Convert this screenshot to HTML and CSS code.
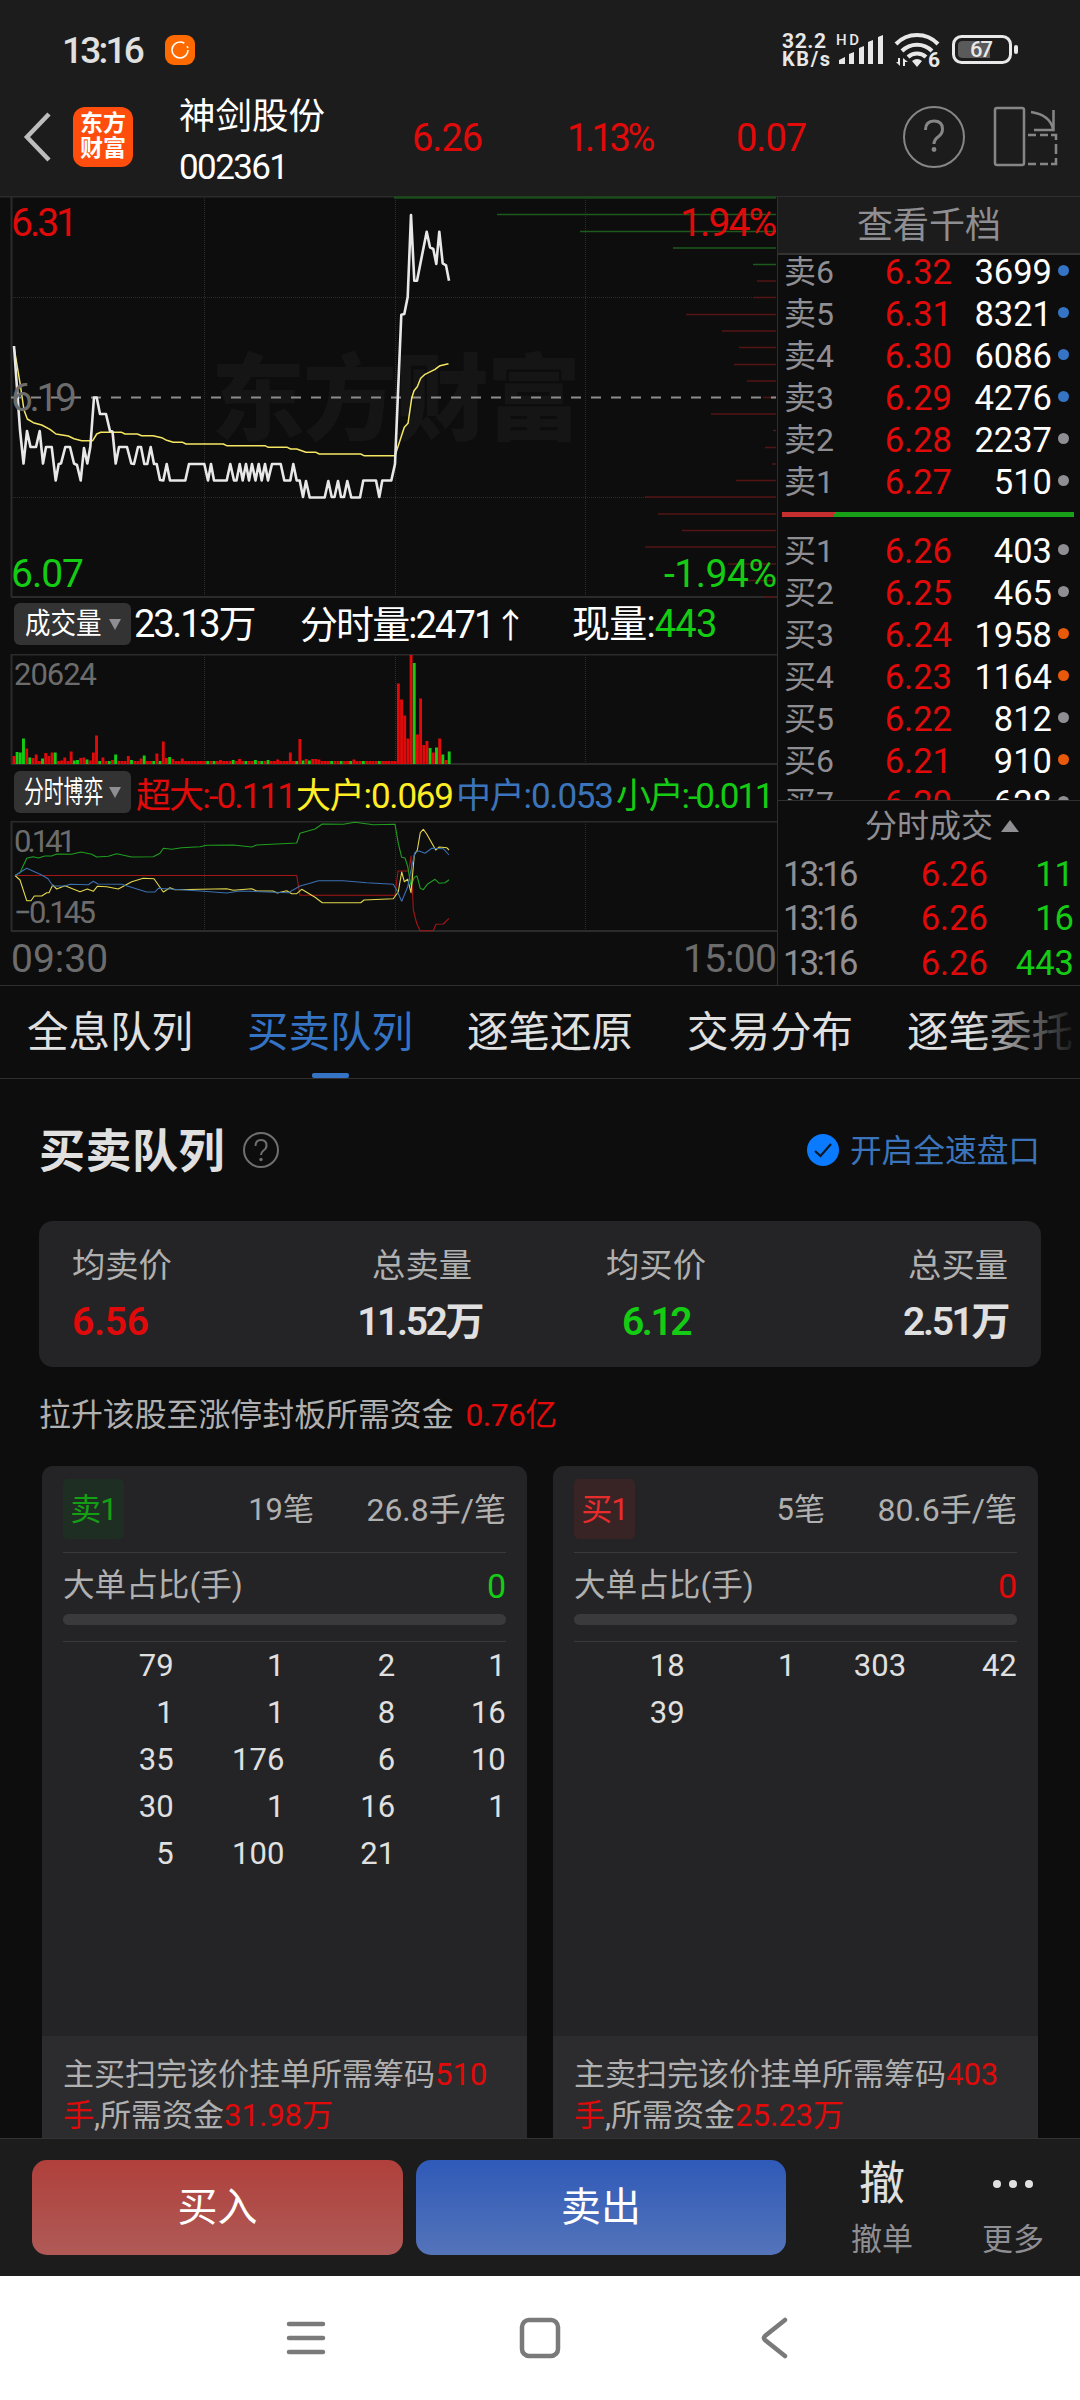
FILE: index.html
```html
<!DOCTYPE html>
<html lang="zh-CN">
<head>
    <meta charset="UTF-8">
    <title>神剑股份 002361</title>
    <link rel="stylesheet" href="styles.css">
</head>
<body>
    <div class="app">
        <div class="status-bar">
            <span class="clock">13:16</span>
            <svg class="status-app" viewBox="0 0 30 30">
                <rect width="30" height="30" rx="9" fill="#ff6a00"/>
                <circle cx="15" cy="15" r="8" fill="none" stroke="#fff" stroke-width="1.6" stroke-dasharray="42 4 2 3"/>
            </svg>
            <svg class="status-icons" viewBox="0 0 252 44" fill="#e8e8e8">
                <g font-weight="700">
                    <text x="0" y="19.500" font-size="21" textLength="44">32.2</text>
                    <text x="0" y="38" font-size="20" textLength="48">KB/s</text>
                    <text x="54" y="17" font-size="15" font-weight="500" textLength="23">HD</text>
                </g>
                <path d="M57 36v-4l6-3v7zM67 36V26l5-2v12zM77 36V20l5-2v18zM86 36V14l5-2v24zM96 36V9l5-2v29z"/>
                <g fill="none" stroke="#e8e8e8" stroke-width="4">
                    <path d="M114 16a29 29 0 0 1 42 0"/>
                    <path d="M120 23a21 21 0 0 1 30 0"/>
                    <path d="M126 29a13 13 0 0 1 18 0"/>
                </g>
                <path d="M130 33q5-4 10 0l-5 6zM118 30v8l-4-4h2v-4zM121 38v-8l5 4h-3v4z"/>
                <text x="146" y="39" font-size="21" font-weight="700">6</text>
                <rect x="171.500" y="8.500" width="57" height="26" rx="8" fill="none" stroke="#e8e8e8" stroke-width="3"/>
                <path d="M181 13h27v17h-27q-5 0-5-4v-9q0-4 5-4z" fill="#5a5a5a"/>
                <rect x="232" y="17" width="4" height="9" rx="2"/>
                <text x="188" y="29" font-size="22" font-weight="500" textLength="23">67</text>
            </svg>
        </div>

        <div class="header">
            <svg class="back" viewBox="0 0 32 50"><path d="M27 2 5 25l22 23" fill="none" stroke="#bdbdbd" stroke-width="4.500"/></svg>
            <div class="logo">东方<br>财富</div>
            <div class="stock">
                <div class="stock-name">神剑股份</div>
                <div class="stock-code">002361</div>
            </div>
            <div class="quote">
                <span>6.26</span><span>1.13%</span><span>0.07</span>
            </div>
            <svg class="header-icons" viewBox="0 0 160 64" fill="none" stroke="#868686" stroke-width="2">
                <circle cx="32" cy="32" r="30"/>
                <path d="M23.500 25q0-9 8.500-9t8.500 8q0 5-4.500 8-4 3-4 7" stroke-width="3"/>
                <circle cx="32" cy="44.500" r="2.400" fill="#868686" stroke="none"/>
                <rect x="93" y="3" width="29" height="57" rx="2" stroke-width="2.500"/>
                <path d="M129 7q19 3 22 17M151.500 5v20H132" stroke-width="2.500"/>
                <path d="M126 30h8M138 30h8M149 30h5v5M154 39v10M154 53v6h-5M126 59h8M138 59h8" stroke-width="2.500"/>
            </svg>
        </div>

        <div class="market">
            <div class="charts">
                <svg class="price-chart" viewBox="0 196 777 404">
                    <text class="watermark" x="211" y="433" textLength="370">东方财富</text>
                    <path class="frame" d="M0 196.500h777M11.500 196v401M11 597h766"/>
                    <path class="grid" d="M204.500 198v398M395.500 198v398M585.500 198v398M11 297.500h765M11 497.500h765"/>
                    <path stroke="#1b4a1b" stroke-width="2.500" d="M394 197.500h382"/>
                    <path stroke="#1d5a1d" stroke-width="1.300" d="M497 214.500h279M580 231.500h196M673 248h103M753 264.500h23"/>
                    <path stroke="#541414" stroke-width="1.400" d="M757 281h19M754 297.500h22M686 314.500h90M722 331h54M739 347.500h37M734 364.500h42M747 381h29M763 397.500h13M711 414h65M773 430.500h3M765 447.500h11M772 464h4M736 480.500h40M645 497h131M658 514h118M682 530.500h94M645 547h131M728 564h48M745 580.500h31M763 597h13"/>
                    <path stroke="#8d8d8d" stroke-width="2" stroke-dasharray="10 10" d="M11 397.500h765"/>
                    <polyline class="line" stroke="#f5e763" points="14,347 20,383 24,410 27.300,419 33.300,422.700 41.700,425 50,429.300 56,434 68.300,436 74,438.700 81.700,440.700 92.700,440.700 96.700,434 100.700,432.300 121.700,432.300 125,434 137.300,434 141.700,435.700 153,435.700 161.700,437.700 166.700,440.300 173.300,442.300 182.700,442.300 186,444 223.300,444 226.700,445.700 265,445.700 268.300,447.300 287.300,447.300 290.700,449 296.700,449 306,452.300 316,452.300 319.300,454 360.700,454 364,455.700 395,455.700 404.300,427.300 408,423.300 411.700,398.300 414,390.700 417.300,386.700 420.700,378.300 425,374.300 435,369.300 440,365.700 448.500,363.700"/>
                    <polyline class="line thick" stroke="#e8e8e8" points="14,346 20,430 23.500,463.500 27,431 30.500,447 36,447 39.700,431 43,463.500 46,447 51.700,447 55.700,480.500 58.700,464 61,463.500 65.300,447 70,447 74,463.500 77,465 80.700,480.500 84,448 87.300,463.500 90.300,447 94,397.500 96.700,397.500 100,414 106,414 110,431 112.500,431.500 115.700,463.500 119,447 127,447 131.300,463.500 134,464 138,447 141,447 144.300,464 147.300,464 150.700,447 154,464 156.700,464 160,480 163.300,480.500 166.700,464 170,480.500 185.300,480.500 189,464 204.300,464 208,480.500 211,464 214,480.500 226.700,480.500 230.300,464 234,480.500 236.500,480.500 239.700,464 242.700,480.500 246,464 249,480.500 252,464 255.500,480.500 258.700,464 261.700,480.500 265,464 268,480.500 272,464 280.700,464 284.300,480.500 290.300,480.500 293.300,464 296.700,480.500 299.700,480.500 303,497 306,481 309.700,497.500 324.700,497.500 328.300,481 331.700,497 334.500,497 338,481 341,497 344,497 347.300,481 351.300,497.500 360,497.500 363.300,480.500 376,480.500 379.300,497 382.300,480.500 391.300,480.500 395,464 401.300,314.700 404.300,314 407.700,297 411,215 414.300,280.700 417,280.700 426.700,231.700 430,247.300 433.300,249 436.300,264 439.300,231.700 442.700,263.300 446,265.300 449,280.700"/>
                    <g font-size="39">
                        <text class="red" x="11" y="236" textLength="67">6.31</text>
                        <text class="red" x="680" y="236" textLength="97">1.94%</text>
                        <text class="dim" x="11" y="411" textLength="66">6.19</text>
                        <text class="green" x="11" y="587" textLength="73">6.07</text>
                        <text class="green" x="664" y="587" textLength="113">-1.94%</text>
                    </g>
                </svg>

                <div class="indicator volume-info">
                    <span class="chip"><span>成交量</span><i class="caret"></i></span>
                    <span class="total">23.13万</span>
                    <span class="minute">分时量:2471<i class="arrow">↑</i></span>
                    <span class="now">现量:<b class="green">443</b></span>
                </div>

                <svg class="volume-chart" viewBox="0 654 777 111">
                    <path class="frame thin" d="M11 654.500h766M11.500 654v110M11 764h766"/>
                    <path class="grid" d="M204.500 655v108M395.500 655v108M585.500 655v108"/>
                    <g id="volume"></g>
                    <text class="dim" x="14" y="685" font-size="31" textLength="83">20624</text>
                </svg>

                <div class="indicator game-info">
                    <span class="chip chip-narrow"><span>分时博弈</span><i class="caret"></i></span>
                    <b class="red">超大:-0.111</b>
                    <b class="yellow">大户:0.069</b>
                    <b class="blue">中户:0.053</b>
                    <b class="green">小户:-0.011</b>
                </div>

                <svg class="game-chart" viewBox="0 821 777 112">
                    <path class="frame thin" d="M11 821.500h766M11.500 821v110M11 931h766"/>
                    <path class="grid" d="M204.500 822v108M395.500 822v108M585.500 822v108"/>
                    <g font-size="31">
                        <text class="dim" x="14" y="852" textLength="62">0.141</text>
                        <text class="dim" x="14" y="923" textLength="82">−0.145</text>
                    </g>
                    <polyline class="line thin" stroke="#a31616" points="15,875.500 296.700,875.500 300,895.300 395,895.300 398,871 408.700,871 411,856 413.300,910 416.700,923.300 420,930.700 433.300,930.700 436,924.300 443.300,924 449,918.300"/>
                    <polyline class="line thin" stroke="#1f9e1f" points="15,875.500 20,872.700 26.700,858.300 33,856.700 38.300,858 45,856 51.700,856 56.700,854 71.700,854.300 81,852 91.700,854.300 96.700,857 108.300,856.300 116.700,853.700 131.700,857 153.300,856.700 160,853.300 163.300,848.300 171.700,849.300 181.700,847.700 200,846.700 206.700,845.300 233.300,845 251.700,847 256.700,845 296.700,843 300,833.300 315,829 322.300,824 343.300,824.300 355,822.300 373.300,824.700 395,824.300 398.300,843.300 401.700,857.300 405,858 407.700,866.700 411,886 414.300,877.300 417,876 420.300,888.300 423.300,889.700 427.300,884.300 435,879.300 439.300,883.300 445,882.700 449,879.700"/>
                    <polyline class="line thin" stroke="#e5d84e" points="15,875.500 20,880 26.700,900.700 31,900.700 34.300,896 41.700,896 46.700,892.700 49,892.700 52.700,885 56.700,889 65,885.700 80,891.700 87.300,889 93.300,891.300 97.300,886.300 106.700,886.700 118.300,889 131.700,881.700 143.300,878.300 154,878.700 163.300,892 170,887.700 175,889.700 226.700,888.700 233.300,890.300 251.700,888.700 256.700,891 273,891 277.300,893 286.700,890.700 291.700,893.700 296.700,893.700 301.700,889.300 315,897.300 322.300,902.700 360.700,902.700 364,900 393.300,898.700 398.300,891.700 401.700,872 404.300,881.700 407.700,879.300 411,892.700 414.300,855 417.300,850 420.300,832.700 423.300,829.300 426.700,834 435.700,850 439.300,847 446.700,847.700 449,850"/>
                    <polyline class="line thin" stroke="#3a6fb0" points="15,875.500 26.700,868.300 41.700,875 48,878.700 53,886 65,886 70,884.300 88.300,884.700 93.300,881.300 98,884 121.700,884.300 133,887.700 146.700,892 155,892 158.300,888.300 173.300,889.300 200,891 226.700,893 240,891 288.300,892.700 300,886 310,883.300 318.300,880.700 343.300,880.700 366.700,882.700 393.300,884.300 396.700,890 401.700,901.300 407.700,886.700 411.700,866.700 415,852.300 419.300,851 425,853.300 431.700,848.300 443.300,848.700 449,855"/>
                </svg>

                <div class="time-axis"><span>09:30</span><span>15:00</span></div>
            </div>

            <div class="depth">
                <div class="depth-title">查看千档</div>
                <div class="book">
                    <div class="level"><span>卖6</span><b>6.32</b><em>3699</em><i class="dot blue-dot"></i></div>
                    <div class="level"><span>卖5</span><b>6.31</b><em>8321</em><i class="dot blue-dot"></i></div>
                    <div class="level"><span>卖4</span><b>6.30</b><em>6086</em><i class="dot blue-dot"></i></div>
                    <div class="level"><span>卖3</span><b>6.29</b><em>4276</em><i class="dot blue-dot"></i></div>
                    <div class="level"><span>卖2</span><b>6.28</b><em>2237</em><i class="dot"></i></div>
                    <div class="level"><span>卖1</span><b>6.27</b><em>510</em><i class="dot"></i></div>
                    <div class="ratio"></div>
                    <div class="level"><span>买1</span><b>6.26</b><em>403</em><i class="dot"></i></div>
                    <div class="level"><span>买2</span><b>6.25</b><em>465</em><i class="dot"></i></div>
                    <div class="level"><span>买3</span><b>6.24</b><em>1958</em><i class="dot orange-dot"></i></div>
                    <div class="level"><span>买4</span><b>6.23</b><em>1164</em><i class="dot orange-dot"></i></div>
                    <div class="level"><span>买5</span><b>6.22</b><em>812</em><i class="dot"></i></div>
                    <div class="level"><span>买6</span><b>6.21</b><em>910</em><i class="dot orange-dot"></i></div>
                    <div class="level"><span>买7</span><b>6.20</b><em>628</em><i class="dot"></i></div>
                </div>
                <div class="ticks-title">分时成交<i class="caret-up"></i></div>
                <div class="tick"><span>13:16</span><b>6.26</b><em>11</em></div>
                <div class="tick"><span>13:16</span><b>6.26</b><em>16</em></div>
                <div class="tick"><span>13:16</span><b>6.26</b><em>443</em></div>
            </div>
        </div>

        <div class="tabs">
            <span>全息队列</span>
            <span class="active">买卖队列</span>
            <span>逐笔还原</span>
            <span>交易分布</span>
            <span>逐笔委托</span>
        </div>

        <div class="content">
            <div class="section-head">
                <h2>买卖队列</h2>
                <svg class="help" viewBox="0 0 38 38" fill="none" stroke="#6f6f6f" stroke-width="2">
                    <circle cx="19" cy="19" r="17"/>
                    <path d="M13.500 15q0-6 5.500-6t5.500 5.500q0 3-3 5-2.500 2-2.500 4.500"/>
                    <circle cx="19" cy="28.500" r="1.700" fill="#6f6f6f" stroke="none"/>
                </svg>
                <svg class="check" viewBox="0 0 32 32">
                    <circle cx="16" cy="16" r="16" fill="#0a7aff"/>
                    <path d="m8 17 5.500 5L24 10" fill="none" stroke="#10181f" stroke-width="2.200"/>
                </svg>
                <span class="speed">开启全速盘口</span>
            </div>

            <div class="summary">
                <div class="stat"><span>均卖价</span><b class="red">6.56</b></div>
                <div class="stat right sell-total"><span>总卖量</span><b>11.52万</b></div>
                <div class="stat middle"><span>均买价</span><b class="green">6.12</b></div>
                <div class="stat right"><span>总买量</span><b>2.51万</b></div>
            </div>

            <p class="limit">拉升该股至涨停封板所需资金 <span class="red">0.76亿</span></p>

            <div class="queues">
                <div class="queue">
                    <div class="queue-head">
                        <span class="badge sell">卖1</span>
                        <span class="count">19笔</span>
                        <span class="avg">26.8手/笔</span>
                    </div>
                    <div class="big-order"><span>大单占比(手)</span><b class="green">0</b></div>
                    <div class="track"></div>
                    <div class="orders">
                        <span>79</span><span>1</span><span>2</span><span>1</span>
                        <span>1</span><span>1</span><span>8</span><span>16</span>
                        <span>35</span><span>176</span><span>6</span><span>10</span>
                        <span>30</span><span>1</span><span>16</span><span>1</span>
                        <span>5</span><span>100</span><span>21</span>
                    </div>
                    <div class="queue-foot">主买扫完该价挂单所需筹码<span class="red">510<br>手</span>,所需资金<span class="red">31.98万</span></div>
                </div>
                <div class="queue">
                    <div class="queue-head">
                        <span class="badge buy">买1</span>
                        <span class="count">5笔</span>
                        <span class="avg">80.6手/笔</span>
                    </div>
                    <div class="big-order"><span>大单占比(手)</span><b class="red">0</b></div>
                    <div class="track"></div>
                    <div class="orders">
                        <span>18</span><span>1</span><span>303</span><span>42</span>
                        <span>39</span>
                    </div>
                    <div class="queue-foot">主卖扫完该价挂单所需筹码<span class="red">403<br>手</span>,所需资金<span class="red">25.23万</span></div>
                </div>
            </div>
        </div>

        <div class="actions">
            <button class="btn btn-buy">买入</button>
            <button class="btn btn-sell">卖出</button>
            <div class="action"><span class="action-icon">撤</span><span>撤单</span></div>
            <div class="action more">
                <svg class="action-icon" viewBox="0 0 46 56" fill="#e0e0e0">
                    <circle cx="7" cy="27" r="4"/><circle cx="23" cy="27" r="4"/><circle cx="39" cy="27" r="4"/>
                </svg>
                <span>更多</span>
            </div>
        </div>

        <div class="nav-bar">
            <svg viewBox="0 0 44 44"><path d="M5 8h34M5 22h34M5 36h34"/></svg>
            <svg viewBox="0 0 44 44"><rect x="4" y="4" width="36" height="36" rx="7"/></svg>
            <svg viewBox="0 0 44 44"><path d="M33 4 13 20q-2 2 0 4l20 16"/></svg>
        </div>
    </div>

    <script>
        // one bar per minute, negative = falling minute
        const volumes = [
            8, -12, -11.5, -25.5, 15.5, -6.5, 6, 9.5, 3, -5.5, 11, 8, 11.5, -11.5, 3, 3.5, 6.5, 3, 12.5, -3.5,
            -4, 6, 6.5, -4.5, 3.5, 11.5, 28.5, -3, 6.5, 3, -3, 4, -9.5, 3, 3, 3, 8, -4, 3, 3,
            5.5, -8.5, 3, 3, -3, 10.5, -3, 22.5, 6, -7, 5, 3, 3, 5.5, 3, 3, 3, 3, 3, 3,
            3, -3, 3, -3, 3, 4, 3, 3, 3, -4, 3, 5, 3, -3, 3, 3, -4, 3, -3, 3,
            -4, 3, 3, 4.5, 3, 3, 3, 11.5, 3, -3, 25, -3.5, 5, -3.5, 5, 5, 4.5, 3, 3, 3,
            -3, 3, 3, -3, 3, 3, -3, 4.5, 3, 3, -3, 3, 3, 3, 3, -3, 3, 3, 3, 3,
            3, 80.5, 64.5, 48.5, 25.5, 109, -101, 29.5, 65.5, 19, 23, -16, 11.5, -16.5, 25.5, -9.5, 4, -12.5
        ];
        const svg = document.getElementById('volume');

        volumes.forEach((v, i) => {
            const bar = document.createElementNS('http://www.w3.org/2000/svg', 'rect');
            const h = Math.abs(v);
            bar.setAttribute('x', 12.5 + i * 3.177);
            bar.setAttribute('y', 764 - h);
            bar.setAttribute('width', 2.9);
            bar.setAttribute('height', h);
            bar.setAttribute('class', v < 0 ? 'green' : 'red');
            svg.appendChild(bar);
        });
    </script>
</body>
</html>
```

FILE: styles.css
```css
* {
    box-sizing: border-box;
}

body {
    margin: 0;
    background: #0d0d0d;
    color: #e0e0e0;
    font-family: Roboto, "Noto Sans CJK SC", sans-serif;
}

b, em, i {
    font-weight: inherit;
    font-style: normal;
}

svg {
    display: block;
    flex: none;
}

.app {
    width: 1080px;
    height: 2400px;
    display: flex;
    flex-direction: column;
    overflow: hidden;
}

.red { color: #e00a0a; fill: #e00a0a; }
.green { color: #14cc14; fill: #14cc14; }
.yellow { color: #ffee24; }
.blue { color: #3b74ba; }
.dim { fill: #6c6c6c; }

/* status bar */
.status-bar {
    height: 98px;
    padding: 2px 46px 0 62px;
    background: #1c1c1c;
    display: flex;
    align-items: center;
}

.clock {
    width: 103px;
    font-size: 37px;
    font-weight: 500;
    letter-spacing: -2.8px;
}

.status-app {
    width: 30px;
    height: 30px;
}

.status-icons {
    width: 252px;
    height: 44px;
    margin-left: auto;
}

/* header */
.header {
    height: 98px;
    padding-left: 22px;
    background: #1c1c1c;
    display: flex;
    align-items: center;
    padding-bottom: 20px;
}

.back {
    width: 32px;
    height: 50px;
}

.logo {
    width: 60px;
    height: 60px;
    margin-left: 19px;
    border-radius: 12px;
    background: #ff4d0d;
    color: #fff;
    font-size: 23px;
    font-weight: 700;
    line-height: 25px;
    padding-top: 4px;
    text-align: center;
}

.stock {
    width: 233px;
    margin-left: 46px;
    padding-top: 10px;
    color: #fff;
    line-height: 51px;
}

.stock-name {
    font-size: 36.5px;
}

.stock-code {
    font-size: 35px;
    letter-spacing: -1.6px;
}

.quote {
    width: 490px;
    padding-top: 2px;
    display: flex;
    font-size: 38px;
    letter-spacing: -1px;
    color: #e00a0a;
}

.quote span:nth-child(1) { width: 155px; }
.quote span:nth-child(2) { width: 169px; letter-spacing: -3.4px; }

.header-icons {
    width: 160px;
    height: 64px;
}

/* charts and order book */
.market {
    height: 790px;
    display: flex;
    border-bottom: 1px solid #2f2f2f;
}

.charts {
    width: 777px;
    flex: none;
}

.price-chart { height: 404px; }
.volume-chart { height: 111px; }
.game-chart { height: 112px; }

.price-chart,
.volume-chart,
.game-chart {
    width: 777px;
}

.frame {
    fill: none;
    stroke: #2b2b2b;
    stroke-width: 2;
}

.grid {
    fill: none;
    stroke: #2d2d2d;
    stroke-width: 1;
    stroke-dasharray: 1 1;
}

.line {
    fill: none;
    stroke-width: 1.5;
    stroke-linejoin: round;
}

.line.thick { stroke-width: 2.6; }
.line.thin { stroke-width: 1.1; }

.watermark {
    fill: #151515;
    font-family: "Noto Sans CJK SC", sans-serif;
    font-size: 94px;
    font-weight: 900;
}

.indicator {
    display: flex;
    align-items: center;
    color: #fff;
    font-size: 38px;
    white-space: nowrap;
}

.volume-info {
    height: 54px;
    padding: 0 0 6px 14px;
    line-height: 40px;
}

.game-info {
    height: 56px;
    padding: 0 0 2px 14px;
    font-size: 35px;
}

.chip {
    width: 117px;
    height: 42px;
    padding: 0 8px 0 11px;
    border-radius: 6px;
    background: #333;
    font-size: 29px;
    line-height: 44px;
    display: flex;
    align-items: center;
}

.chip span {
    width: 84px;
    transform: scaleX(0.88);
    transform-origin: left;
}

.chip-narrow { padding-left: 10px; }

.chip-narrow span {
    width: 85px;
    font-size: 30px;
    transform: scaleX(0.66);
}

.caret {
    border: 6.5px solid transparent;
    border-top: 11px solid #8e8e93;
    border-bottom: 0;
}

.total { width: 166px; margin-left: 3px; letter-spacing: -2.2px; }
.minute { width: 272px; letter-spacing: -1.9px; }
.now { letter-spacing: -0.8px; }

.arrow {
    font-family: "Noto Sans CJK SC", sans-serif;
    font-size: 34px;
}

.game-info .red { width: 160px; margin-left: 5px; }
.game-info .yellow { width: 160px; }
.game-info .blue { width: 160px; }
.game-info b { letter-spacing: -1.9px; }
.game-info .yellow,
.game-info .blue { letter-spacing: -1.2px; }
.game-info .green { letter-spacing: -2.2px; }

.time-axis {
    height: 52px;
    padding: 0 1px 0 11px;
    display: flex;
    align-items: center;
    justify-content: space-between;
    color: #6c6c6c;
    font-size: 39px;
}

.time-axis span:last-child { letter-spacing: -0.8px; }

.depth {
    flex: 1;
    border-left: 1px solid #2f2f2f;
    border-top: 1px solid #2f2f2f;
    font-size: 34.5px;
}

.depth-title {
    height: 58px;
    border-bottom: 2px solid #333;
    background: #1c1c1c;
    color: #8e8e93;
    font-size: 36px;
    line-height: 59px;
    text-align: center;
}

.book {
    height: 547px;
    margin-top: -1px;
    padding-left: 6px;
    border-bottom: 1px solid #2f2f2f;
    overflow: hidden;
}

.level {
    height: 42px;
    line-height: 36px;
    display: flex;
    align-items: center;
}

.level:first-child { margin-top: -3px; }

.level span {
    width: 66px;
    color: #8e8e93;
    font-size: 32px;
}

.level b {
    width: 102px;
    text-align: right;
    color: #e00a0a;
}

.level em {
    width: 100px;
    text-align: right;
    color: #fff;
}

.dot {
    width: 11px;
    height: 11px;
    margin: 0 0 3px 6px;
    border-radius: 50%;
    background: #8e8e93;
}

.blue-dot { background: #3573c4; }
.orange-dot { background: #e8590c; }

.ratio {
    height: 5px;
    width: 292px;
    margin: 9px 0 13px -2px;
    background: linear-gradient(100deg, #c52f2f 52px, #18a018 52px);
}

.ticks-title {
    height: 50px;
    line-height: 48px;
    padding-left: 87px;
    color: #8e8e93;
    font-size: 32px;
    display: flex;
    align-items: center;
}

.caret-up {
    margin-left: 8px;
    border: 9px solid transparent;
    border-bottom: 12px solid #8e8e93;
    border-top: 0;
}

.tick {
    height: 44.3px;
    padding: 2px 6px 0 5px;
    display: flex;
    align-items: center;
}

.tick span { width: 92px; color: #8e8e93; letter-spacing: -2.6px; }
.tick b { width: 113px; text-align: right; color: #e00a0a; }
.tick em { flex: 1; text-align: right; color: #14cc14; }

/* tabs */
.tabs {
    position: relative;
    height: 93px;
    padding-left: 27px;
    border-bottom: 1px solid #2f2f2f;
    display: flex;
    flex: none;
    overflow: hidden;
    font-size: 41.5px;
    line-height: 94px;
    white-space: nowrap;
}

.tabs span {
    position: relative;
    width: 220px;
    height: 92px;
    flex: none;
}

.tabs .active { color: #3573c4; }

.tabs .active::after {
    content: "";
    position: absolute;
    left: 65px;
    bottom: 0;
    width: 37px;
    height: 5px;
    border-radius: 2px;
    background: #3573c4;
}

.tabs::after {
    content: "";
    position: absolute;
    right: 0;
    top: 0;
    width: 110px;
    height: 90px;
    background: linear-gradient(to right, transparent, #0d0d0d);
}

/* queue content */
.content {
    flex: 1;
    min-height: 0;
    overflow: hidden;
    padding: 0 39px;
}

.section-head {
    height: 142px;
    display: flex;
    align-items: center;
}

h2 {
    margin: 0;
    padding-bottom: 6px;
    font-size: 46px;
    font-weight: 700;
    letter-spacing: 0.5px;
}

.help {
    width: 38px;
    height: 38px;
    margin-left: 17px;
}

.check {
    width: 32px;
    height: 32px;
    margin-left: auto;
}

.speed {
    margin-left: 11px;
    padding: 0 1px 5px 0;
    color: #3b74ba;
    font-size: 31.7px;
}

.summary {
    height: 146px;
    padding: 0 33px;
    border-radius: 14px;
    background: #242426;
    display: grid;
    grid-template-columns: 150px 260px 348px 178px;
    align-items: center;
}

.stat {
    display: flex;
    flex-direction: column;
    font-size: 33.3px;
    line-height: 56px;
    color: #b0b0b0;
}

.stat b {
    color: #e0e0e0;
    font-size: 39px;
    font-weight: 600;
    letter-spacing: -0.3px;
}

.stat .red { color: #e00a0a; }
.stat .green { color: #14cc14; letter-spacing: -2.5px; }
.stat.right { align-items: flex-end; }
.stat.right b { letter-spacing: -2.4px; }
.sell-total span { margin-right: 10px; }
.stat.middle { align-items: center; }

.limit {
    margin: 23px 0 0 0;
    font-size: 31.9px;
    line-height: 50px;
    color: #b0b0b0;
}

.limit .red {
    margin-left: 4px;
    letter-spacing: -0.6px;
}

.queues {
    margin-top: 26px;
    padding: 0 3px;
    display: flex;
    gap: 26px;
}

.queue {
    width: 485px;
    height: 700px;
    border-radius: 11px;
    background: #242426;
    color: #b0b0b0;
    font-size: 31px;
}

.queue-head {
    height: 87px;
    margin: 0 21px;
    border-bottom: 1px solid #3a3a3c;
    display: flex;
    align-items: center;
}

.badge {
    width: 61px;
    height: 60px;
    line-height: 62px;
    border-radius: 5px;
    text-align: center;
    letter-spacing: -1px;
}

.sell { background: #1f2e22; color: #14a014; }
.buy { background: #382325; color: #e82c2c; }

.count {
    width: 190px;
    padding-bottom: 5px;
    text-align: right;
}

.avg {
    flex: 1;
    padding-bottom: 5px;
    font-size: 32px;
    text-align: right;
}

.big-order {
    height: 61px;
    margin: 0 21px;
    font-size: 31.6px;
    line-height: 66px;
    display: flex;
    justify-content: space-between;
}

.big-order b {
    font-size: 34px;
}

.track {
    height: 11px;
    margin: 0 21px;
    border-radius: 6px;
    background: #3a3a3c;
}

.orders {
    height: 395px;
    margin: 16px 21px 0;
    border-top: 1px solid #3a3a3c;
    display: grid;
    grid-template-columns: repeat(4, 110.7px);
    grid-auto-rows: 47px;
    align-content: start;
    line-height: 47px;
    text-align: right;
    color: #e0e0e0;
}

.queue-foot {
    height: 130px;
    padding: 18px 21px;
    background: #2c2c2e;
    line-height: 41px;
    font-size: 31px;
    white-space: nowrap;
}

/* bottom bar */
.actions {
    height: 138px;
    padding-left: 32px;
    border-top: 1px solid #333;
    background: #1c1c1c;
    display: flex;
    align-items: center;
    flex: none;
}

.btn {
    width: 371px;
    height: 95px;
    margin-right: 13px;
    border: none;
    border-radius: 15px;
    color: #fff;
    font: 40px/90px Roboto, "Noto Sans CJK SC", sans-serif;
}

.btn-sell { width: 370px; }

.btn-buy { background: linear-gradient(#b0403b, #af5a57); }
.btn-sell { background: linear-gradient(#2f5ab8, #5474ba); }

.action {
    width: 62px;
    margin-left: 52px;
    padding-top: 9px;
    display: flex;
    flex-direction: column;
    align-items: center;
    font-size: 31px;
    line-height: 54px;
    color: #8e8e93;
    white-space: nowrap;
}

.action.more { margin-left: 69px; }

.action-icon {
    height: 56px;
    width: 46px;
    font-size: 46px;
    line-height: 52px;
    color: #e0e0e0;
}

.nav-bar {
    height: 124px;
    background: #fff;
    display: flex;
    justify-content: center;
    align-items: center;
    gap: 190px;
    flex: none;
}

.nav-bar svg {
    width: 44px;
    height: 44px;
    fill: none;
    stroke: #7a7a7a;
    stroke-width: 4.5;
    stroke-linecap: round;
}
```
